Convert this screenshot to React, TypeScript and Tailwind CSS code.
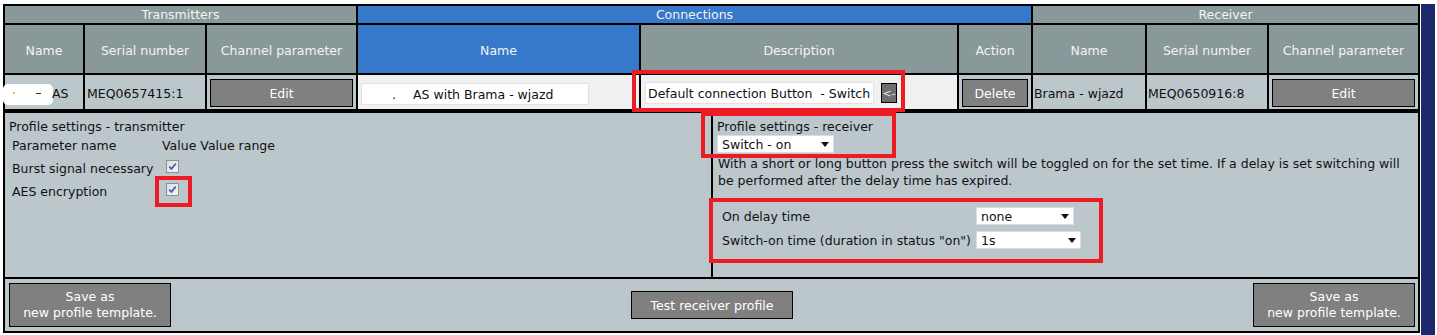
import React from "react";

const HEAD = "bg-[#899899] text-[#f4f4f4] flex items-center justify-center";
const BLUE = "bg-[#3678c9] text-[#f4f4f4] flex items-center justify-center";
const PANEL = "bg-[#bcc7cc]";

function GreyButton({ label, className }: { label: React.ReactNode; className?: string }) {
  return (
    <div
      className={
        "flex items-center justify-center border border-black bg-[#808080] text-center text-white " +
        (className ?? "")
      }
    >
      {label}
    </div>
  );
}

function Caret() {
  return (
    <svg width="8" height="5" viewBox="0 0 8 5" className="shrink-0">
      <polygon points="0,0 8,0 4,5" fill="#111" />
    </svg>
  );
}

function FakeSelect({ value, className }: { value: string; className?: string }) {
  return (
    <div
      className={
        "flex h-[18px] items-center justify-between border border-[#dcdcdc] bg-white pl-[4px] pr-[4px] " +
        (className ?? "")
      }
    >
      <span>{value}</span>
      <Caret />
    </div>
  );
}

function Check() {
  return (
    <svg width="13" height="13" viewBox="0 0 13 13">
      <defs>
        <linearGradient id="cbg" x1="0" y1="0" x2="1" y2="1">
          <stop offset="0" stopColor="#d9dde5" />
          <stop offset="1" stopColor="#f6f6f8" />
        </linearGradient>
      </defs>
      <rect x="0.5" y="0.5" width="12" height="12" fill="url(#cbg)" stroke="#8e9092" />
      <path d="M3.2 6.6 L5.4 8.9 L9.8 3.6" fill="none" stroke="#4d60a0" strokeWidth="1.7" />
    </svg>
  );
}

function RedBox({ className }: { className: string }) {
  return <div className={"pointer-events-none absolute border-4 border-[#ed1c24] " + className} />;
}

export default function App() {
  return (
    <div className="relative flex h-[335px] w-[1437px] bg-white pl-[3px] pt-[4px] font-['DejaVu_Sans',Verdana,sans-serif] text-[12.5px] leading-[15px] text-[#111]">
      <div className="flex w-[1417px] flex-col">
        {/* connection table */}
        <div className="grid grid-cols-[78px_120px_149px_281px_316px_72px_112px_120px_149px] grid-rows-[17px_48px_34px] gap-[2px] bg-black p-[2px]">
          <div className={HEAD + " col-span-3"}>Transmitters</div>
          <div className={BLUE + " col-span-3"}>Connections</div>
          <div className={HEAD + " col-span-3"}>Receiver</div>

          <div className={HEAD + " pt-[3px]"}>Name</div>
          <div className={HEAD + " pt-[3px]"}>Serial number</div>
          <div className={HEAD + " pt-[3px]"}>Channel parameter</div>
          <div className={BLUE + " pt-[3px]"}>Name</div>
          <div className={HEAD + " pt-[3px]"}>Description</div>
          <div className={HEAD + " pt-[3px]"}>Action</div>
          <div className={HEAD + " pt-[3px]"}>Name</div>
          <div className={HEAD + " pt-[3px]"}>Serial number</div>
          <div className={HEAD + " pt-[3px]"}>Channel parameter</div>

          <div className={PANEL + " relative pl-[47px] pt-[11px]"}>
            <div className="absolute left-[-2px] top-[9px] h-[21px] w-[50px] rounded-[5px] bg-white">
              <span className="absolute left-[10px] top-[8px] h-[2px] w-[2px] rounded-full bg-[#d9a441]" />
              <span className="absolute left-[33px] top-[9px] h-[1px] w-[5px] bg-[#333]" />
            </div>
            <span className="relative">AS</span>
          </div>
          <div className={PANEL + " pl-[2px] pt-[11px]"}>MEQ0657415:1</div>
          <div className={PANEL + " px-[3px] pt-[4px]"}>
            <GreyButton label="Edit" className="h-[28px]" />
          </div>
          <div className="bg-[#f0f0f0] pl-[3px] pt-[8px]">
            <div className="relative flex h-[22px] w-[228px] items-center border border-[#e2e2e2] bg-white">
              <span className="absolute left-[30px]">.</span>
              <span className="pl-[51px]">AS with Brama - wjazd</span>
            </div>
          </div>
          <div className="flex items-start bg-[#f0f0f0] pl-[4px] pt-[7px]">
            <div className="flex h-[22px] w-[229px] items-center whitespace-pre border border-[#e2e2e2] bg-white pl-[2px]">
              Default connection Button  - Switch
            </div>
            <div className="ml-[7px] mt-[1px] flex h-[20px] w-[16px] items-center justify-center border border-black bg-[#6e6e6e] text-[11px] text-[#e6e6e6]">
              &lt;-
            </div>
          </div>
          <div className={PANEL + " pl-[3px] pr-[3px] pt-[4px]"}>
            <GreyButton label="Delete" className="h-[28px]" />
          </div>
          <div className={PANEL + " pl-[1px] pt-[11px]"}>Brama - wjazd</div>
          <div className={PANEL + " pl-[1px] pt-[11px]"}>MEQ0650916:8</div>
          <div className={PANEL + " px-[3px] pt-[4px]"}>
            <GreyButton label="Edit" className="h-[28px]" />
          </div>
        </div>

        {/* profile settings */}
        <div className="grid grid-rows-[164px_52px] gap-[2px] border-2 border-black bg-black">
          <div className="grid grid-cols-[706px_705px] gap-[2px]">
            <div className={PANEL + " pl-[4px] pt-[7px]"}>
              <div className="leading-[14px]">Profile settings - transmitter</div>
              <div className="grid grid-cols-[150px_1fr] grid-rows-[23px_23px_23px] pl-[3px]">
                <div className="flex items-center">Parameter name</div>
                <div className="flex items-center">Value Value range</div>
                <div className="flex items-center">Burst signal necessary</div>
                <div className="pl-[4px] pt-[3px]">
                  <Check />
                </div>
                <div className="flex items-center">AES encryption</div>
                <div className="pl-[4px] pt-[3px]">
                  <Check />
                </div>
              </div>
            </div>
            <div className={PANEL + " pl-[4px] pt-[7px]"}>
              <div className="leading-[14px]">Profile settings - receiver</div>
              <FakeSelect value="Switch - on" className="mt-[1px] w-[117px]" />
              <p className="mt-[2px] whitespace-nowrap pl-[1px] leading-[17px]">
                With a short or long button press the switch will be toggled on for the set time. If a delay is set switching will
                <br />
                be performed after the delay time has expired.
              </p>
              <div className="mt-[15px] grid grid-cols-[254px_1fr] grid-rows-[24px_24px] pl-[5px]">
                <div className="flex items-center">On delay time</div>
                <div className="flex items-center">
                  <FakeSelect value="none" className="w-[98px]" />
                </div>
                <div className="flex items-center">Switch-on time (duration in status "on")</div>
                <div className="flex items-center">
                  <FakeSelect value="1s" className="w-[105px]" />
                </div>
              </div>
            </div>
          </div>
          <div className={PANEL + " flex items-center justify-between pl-[4px] pr-[3px]"}>
            <GreyButton
              label={
                <span className="leading-[16px]">
                  Save as
                  <br />
                  new profile template.
                </span>
              }
              className="h-[44px] w-[162px]"
            />
            <GreyButton label="Test receiver profile" className="h-[28px] w-[162px]" />
            <GreyButton
              label={
                <span className="leading-[16px]">
                  Save as
                  <br />
                  new profile template.
                </span>
              }
              className="h-[44px] w-[162px]"
            />
          </div>
        </div>
      </div>
      <div className="ml-px w-[14px] bg-[#1b2a6b]" />

      {/* annotation boxes */}
      <RedBox className="left-[632px] top-[70px] h-[42px] w-[273px]" />
      <RedBox className="left-[155px] top-[176px] h-[31px] w-[37px]" />
      <RedBox className="left-[701px] top-[112px] h-[46px] w-[195px]" />
      <RedBox className="left-[709px] top-[198px] h-[65px] w-[394px]" />
    </div>
  );
}
